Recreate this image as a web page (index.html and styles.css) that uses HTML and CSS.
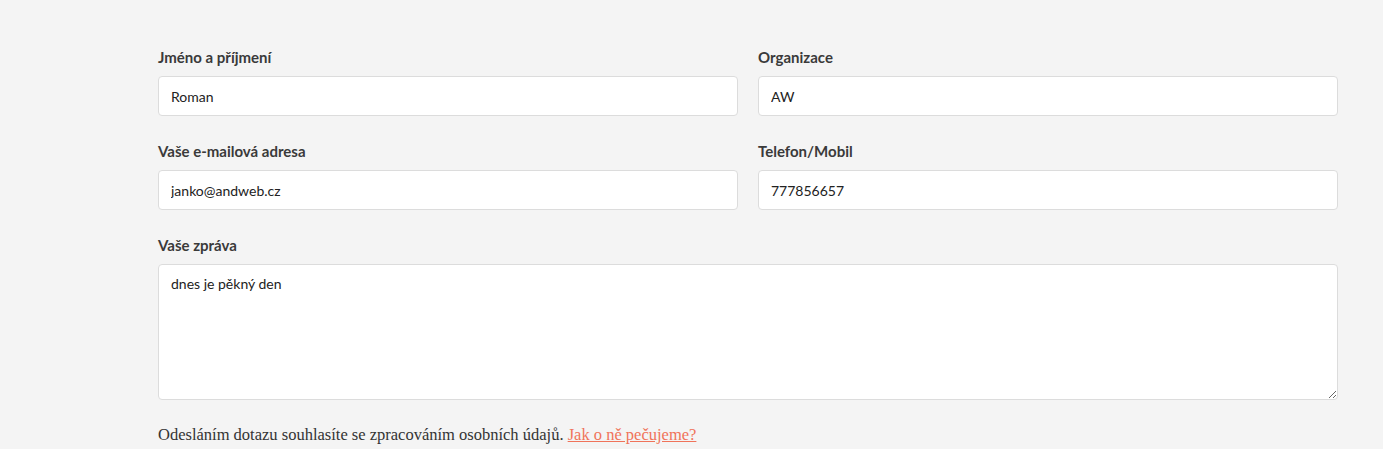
FILE: index.html
```html
<!DOCTYPE html>
<html lang="cs">
<head>
    <meta charset="UTF-8">
    <meta name="viewport" content="width=device-width, initial-scale=1.0">
    <title>Kontaktní formulář</title>
    <link rel="stylesheet" href="styles.css">
</head>
<body>
    <form class="contact-form">
        <div class="form-row">
            <div class="form-group">
                <label for="name">Jméno a příjmení</label>
                <input type="text" id="name" value="Roman">
            </div>
            <div class="form-group">
                <label for="org">Organizace</label>
                <input type="text" id="org" value="AW">
            </div>
        </div>
        <div class="form-row">
            <div class="form-group">
                <label for="email">Vaše e-mailová adresa</label>
                <input type="email" id="email" value="janko@andweb.cz">
            </div>
            <div class="form-group">
                <label for="phone">Telefon/Mobil</label>
                <input type="text" id="phone" value="777856657">
            </div>
        </div>
        <div class="form-row single">
            <div class="form-group">
                <label for="message">Vaše zpráva</label>
                <textarea id="message">dnes je pěkný den</textarea>
            </div>
        </div>
        <p class="consent">Odesláním dotazu souhlasíte se zpracováním osobních údajů. <a href="#">Jak o ně pečujeme?</a></p>
    </form>
</body>
</html>
```

FILE: styles.css
```css
body {
    margin: 0;
    background-color: #f4f4f4;
    font-family: 'Lato', 'Noto Sans', sans-serif;
    color: #333;
}
.contact-form {
    width: 1180px;
    padding: 47px 0 0 158px;
}
.form-row {
    display: grid;
    grid-template-columns: 1fr 1fr;
    gap: 20px;
    margin-bottom: 25px;
}
.form-row.single {
    grid-template-columns: 1fr;
    margin-bottom: 24px;
}
label {
    display: block;
    font-size: 15px;
    font-weight: bold;
    line-height: 20px;
    margin-bottom: 9px;
    color: #3a3a3a;
}
input,
textarea {
    display: block;
    width: 100%;
    box-sizing: border-box;
    border: 1px solid #dcdcdc;
    border-radius: 4px;
    background-color: #fff;
    font-family: 'Lato', 'Noto Sans', sans-serif;
    font-size: 14px;
    color: #222;
    padding: 0 12px;
}
input {
    height: 40px;
}
textarea {
    height: 136px;
    padding-top: 10px;
    resize: vertical;
}
.consent {
    margin: 0;
    font-family: 'Liberation Serif', Georgia, serif;
    font-size: 16.5px;
    line-height: 22px;
    color: #333;
}
.consent a {
    color: #f0735a;
}
```
